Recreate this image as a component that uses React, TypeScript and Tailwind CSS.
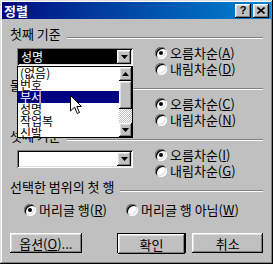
import React from 'react';

const raised =
  'shadow-[inset_-1px_-1px_#000,inset_1px_1px_#fff,inset_-2px_-2px_#808080,inset_2px_2px_#dfdfdf]';
const sunken =
  'shadow-[inset_1px_1px_#808080,inset_-1px_-1px_#fff,inset_2px_2px_#000,inset_-2px_-2px_#dfdfdf]';

type Label = [string, string, string];

function Keyed({ label }: { label: Label }) {
  return (
    <span className="whitespace-nowrap">
      {label[0]}
      <span className="underline underline-offset-1">{label[1]}</span>
      {label[2]}
    </span>
  );
}

function DownArrow() {
  return (
    <svg width="7" height="4" viewBox="0 0 7 4">
      <path d="M0 0h7L3.5 4z" fill="#000" />
    </svg>
  );
}

function Radio({ checked, label }: { checked?: boolean; label: Label }) {
  return (
    <div className="flex items-center h-[16px]">
      <div className={`w-[12px] h-[12px] shrink-0 rounded-full bg-white flex items-center justify-center ${sunken}`}>
        {checked && <div className="w-[4px] h-[4px] rounded-full bg-black" />}
      </div>
      <div className="ml-[3px] leading-[14px]">
        <Keyed label={label} />
      </div>
    </div>
  );
}

function Header({ title }: { title: string }) {
  return (
    <div className="flex items-start h-[14px]">
      <span className="leading-[14px] whitespace-nowrap">{title}</span>
      <div className="flex-1 ml-[6px] mt-[10px] h-[2px] border-t border-t-[#808080] border-b border-b-white" />
    </div>
  );
}

function Combo({ value }: { value?: string }) {
  return (
    <div className={`flex w-[116px] h-[18px] p-[2px] bg-white ${sunken}`}>
      <div className={`flex-1 flex items-center pl-[2px] text-[12px] leading-[14px] ${value ? 'bg-black text-white' : ''}`}>
        {value}
      </div>
      <div className={`w-[14px] flex items-center justify-center bg-[#c0c0c0] ${raised}`}>
        <DownArrow />
      </div>
    </div>
  );
}

function Section({ title, value, up, down }: { title: string; value?: string; up: Label; down: Label }) {
  return (
    <div className="h-[51px]">
      <Header title={title} />
      <div className="flex items-start mt-[7px] pl-[7px]">
        <Combo value={value} />
        <div className="ml-[22px] -mt-[3px] flex flex-col">
          <Radio checked label={up} />
          <Radio label={down} />
        </div>
      </div>
    </div>
  );
}

function Btn({ children, className = '' }: { children: React.ReactNode; className?: string }) {
  return (
    <div className={`h-[20px] flex items-center justify-center bg-[#c0c0c0] leading-none ${raised} ${className}`}>
      {children}
    </div>
  );
}

const items = ['(없음)', '번호', '부서', '성명', '작업복', '신발'];

export default function App() {
  return (
    <div className="relative w-[273px] h-[264px] bg-[#c0c0c0] p-[2px] overflow-hidden shadow-[inset_-1px_-1px_#000,inset_1px_1px_#dfdfdf,inset_-2px_-2px_#808080,inset_2px_2px_#fff] font-['Noto_Sans_CJK_KR','Liberation_Sans',sans-serif] text-[13px] text-black">
      {/* title bar */}
      <div className="flex items-center h-[17px] px-[2px] bg-linear-to-r from-[#000080] to-[#1084d0]">
        <span className="text-white font-bold text-[13px] leading-none">정렬</span>
        <div className="ml-auto flex">
          <div className={`w-[16px] h-[14px] flex items-center justify-center bg-[#c0c0c0] text-[11px] font-bold leading-none font-['Liberation_Sans',sans-serif] ${raised}`}>
            ?
          </div>
          <div className={`ml-[2px] w-[16px] h-[14px] flex items-center justify-center bg-[#c0c0c0] ${raised}`}>
            <svg width="8" height="7" viewBox="0 0 8 7">
              <path d="M0.5 0.5L7.5 6.5M7.5 0.5L0.5 6.5" stroke="#000" strokeWidth="1.6" />
            </svg>
          </div>
        </div>
      </div>

      <div className="px-[8px] pt-[8px]">
        <Section title="첫째 기준" value="성명" up={['오름차순(', 'A', ')']} down={['내림차순(', 'D', ')']} />
        <Section title="둘째 기준" up={['오름차순(', 'C', ')']} down={['내림차순(', 'N', ')']} />
        <Section title="셋째 기준" up={['오름차순(', 'I', ')']} down={['내림차순(', 'G', ')']} />

        <Header title="선택한 범위의 첫 행" />
        <div className="flex mt-[8px] pl-[14px]">
          <div className="w-[102px]">
            <Radio checked label={['머리글 행(', 'R', ')']} />
          </div>
          <Radio label={['머리글 행 아님(', 'W', ')']} />
        </div>

        <div className="flex mt-[15px]">
          <Btn className="w-[72px]">
            <Keyed label={['옵션(', 'O', ')...']} />
          </Btn>
          <div className="ml-[35px] w-[70px] h-[20px] border border-black">
            <Btn className="h-[18px] w-full">확인</Btn>
          </div>
          <Btn className="ml-[6px] w-[71px]">취소</Btn>
        </div>
      </div>

      {/* open dropdown list */}
      <div className="absolute left-[17px] top-[66px] w-[116px] h-[72px] bg-white border border-black flex overflow-hidden">
        <div className="flex-1 flex flex-col text-[12px]">
          {items.map((it) => (
            <div
              key={it}
              className={`h-[12px] shrink-0 leading-[12px] pl-[2px] ${it === '부서' ? 'bg-[#000080] text-white' : ''}`}
            >
              {it}
            </div>
          ))}
        </div>
        <div className="w-[13px] flex flex-col">
          <div className={`h-[14px] flex items-center justify-center bg-[#c0c0c0] ${raised}`}>
            <svg width="7" height="4" viewBox="0 0 7 4">
              <path d="M0 4h7L3.5 0z" fill="#000" />
            </svg>
          </div>
          <div className={`h-[28px] bg-[#c0c0c0] ${raised}`} />
          <div className="flex-1 bg-[repeating-conic-gradient(#c0c0c0_0_25%,#ffffff_0_50%)] bg-[length:2px_2px]" />
          <div className={`h-[14px] flex items-center justify-center bg-[#c0c0c0] ${raised}`}>
            <DownArrow />
          </div>
        </div>
      </div>

      {/* mouse pointer */}
      <svg className="absolute left-[70px] top-[95px]" width="12" height="19" viewBox="0 0 12 19">
        <path d="M0.5 0.5V16L4.5 12.2L7.3 18.5L9.5 17.5L6.8 11.5H11.5Z" fill="#fff" stroke="#000" />
      </svg>
    </div>
  );
}
